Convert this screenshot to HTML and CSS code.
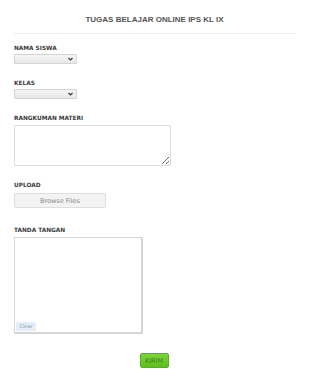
FILE: index.html
```html
<!DOCTYPE html>
<html lang="en">
<head>
  <meta charset="UTF-8" />
  <meta name="viewport" content="width=device-width, initial-scale=1" />
  <title>Tugas Belajar Online IPS KL IX</title>
  <link rel="stylesheet" href="styles.css">
</head>
<body>
  <form class="form-wrap">
    <h1 class="form-title">TUGAS BELAJAR ONLINE IPS KL IX</h1>
    <div class="divider"></div>

    <div class="field">
      <label class="field-label">NAMA SISWA</label>
      <div class="select-wrap">
        <select class="select"><option></option></select>
        <svg class="chevron" width="5" height="4" viewBox="0 0 5 4"><path d="M0.5 1 L2.5 3 L4.5 1" fill="none" stroke="#333" stroke-width="1.1"/></svg>
      </div>
    </div>

    <div class="field">
      <label class="field-label">KELAS</label>
      <div class="select-wrap">
        <select class="select"><option></option></select>
        <svg class="chevron" width="5" height="4" viewBox="0 0 5 4"><path d="M0.5 1 L2.5 3 L4.5 1" fill="none" stroke="#333" stroke-width="1.1"/></svg>
      </div>
    </div>

    <div class="field">
      <label class="field-label">RANGKUMAN MATERI</label>
      <textarea class="textarea"></textarea>
    </div>

    <div class="field">
      <label class="field-label gap-wide">UPLOAD</label>
      <button type="button" class="browse">Browse Files</button>
    </div>

    <div class="field field-sign">
      <label class="field-label">TANDA TANGAN</label>
      <div class="sign-pad">
        <span class="clear-btn">Clear</span>
      </div>
    </div>

    <div class="submit-row">
      <button type="button" class="submit">KIRIM</button>
    </div>
  </form>
</body>
</html>
```

FILE: styles.css
```css
body {
  margin: 0;
  padding: 0;
  background: #fff;
  font-family: "DejaVu Sans", Verdana, sans-serif;
}
.form-wrap {
  padding: 14px 15px 0 14px;
}
.form-title {
  margin: 0;
  font-family: "Liberation Sans", Arial, sans-serif;
  font-size: 8px;
  line-height: 11px;
  font-weight: bold;
  color: #555;
  text-align: center;
}
.divider {
  height: 1px;
  background: #ececec;
  margin-top: 8px;
}
.field {
  display: flex;
  flex-direction: column;
  align-items: flex-start;
  margin-top: 15px;
}
.divider + .field { margin-top: 10px; }
.field-sign { margin-top: 18px; }
.field-label {
  font-size: 5.8px;
  line-height: 8px;
  font-weight: bold;
  color: #3a3a3a;
  margin-bottom: 2px;
}
.gap-wide { margin-bottom: 4px; }
.select-wrap {
  position: relative;
  width: 63px;
  height: 10px;
}
.select {
  appearance: none;
  -webkit-appearance: none;
  display: block;
  width: 63px;
  height: 10px;
  margin: 0;
  padding: 0;
  border: 1px solid #d4d4d4;
  border-radius: 1px;
  background: linear-gradient(#f4f4f4, #e8e8e8);
}
.chevron {
  position: absolute;
  right: 4px;
  top: 3px;
}
.textarea {
  display: block;
  width: 157px;
  height: 41px;
  box-sizing: border-box;
  margin: 1px 0 0;
  padding: 0;
  border: 1px solid #dcdcdc;
  border-radius: 1px;
  background: #fff;
  resize: vertical;
}
.browse {
  width: 92px;
  height: 15px;
  margin: 0;
  padding: 0;
  border: 1px solid #ddd;
  border-radius: 2px;
  background: #f3f3f3;
  font-family: "DejaVu Sans", Verdana, sans-serif;
  font-size: 6.5px;
  color: #888;
}
.sign-pad {
  position: relative;
  width: 129px;
  height: 97px;
  box-sizing: border-box;
  margin-top: 1px;
  border: 1px solid #d6d6d6;
  border-right-width: 2px;
  border-bottom-width: 2px;
  border-radius: 1px;
  background: #fff;
}
.clear-btn {
  position: absolute;
  left: 1px;
  bottom: 1px;
  width: 20px;
  height: 9px;
  background: #e4eef9;
  color: #8a96a6;
  font-size: 5px;
  line-height: 9px;
  text-align: center;
}
.submit-row {
  display: flex;
  justify-content: center;
  margin-top: 19px;
  padding-right: 1px;
}
.submit {
  width: 29px;
  height: 15px;
  margin: 0;
  padding: 0;
  border: 1px solid #56b21c;
  border-radius: 2px;
  background: linear-gradient(#7ed43a, #5cbf1e);
  font-family: "DejaVu Sans", Verdana, sans-serif;
  font-size: 6.5px;
  color: #3d7f14;
}
```
